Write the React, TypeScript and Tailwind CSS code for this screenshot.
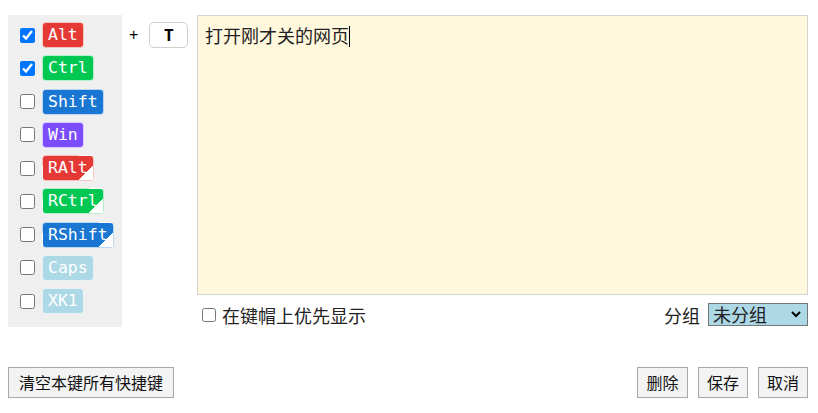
import React from "react";

type Mod = { label: string; bg: string; checked?: boolean };

const mods: Mod[] = [
  { label: "Alt", bg: "bg-[#e53935]", checked: true },
  { label: "Ctrl", bg: "bg-[#00c853]", checked: true },
  { label: "Shift", bg: "bg-[#1976d2]" },
  { label: "Win", bg: "bg-[#7c4dff]" },
  { label: "RAlt", bg: "bg-[linear-gradient(135deg,#e53935_0,#e53935_calc(100%-10px),#ffffff_calc(100%-10px))]" },
  { label: "RCtrl", bg: "bg-[linear-gradient(135deg,#00c853_0,#00c853_calc(100%-10px),#ffffff_calc(100%-10px))]" },
  { label: "RShift", bg: "bg-[linear-gradient(135deg,#1976d2_0,#1976d2_calc(100%-10px),#ffffff_calc(100%-10px))]" },
  { label: "Caps", bg: "bg-[#add8e6]" },
  { label: "XK1", bg: "bg-[#add8e6]" },
];

const cjk = "font-['Microsoft_YaHei','Noto_Sans_CJK_SC',sans-serif]";

function Btn({ children, className = "" }: { children: React.ReactNode; className?: string }) {
  return (
    <button
      className={`h-[31px] px-0 border border-[#a8a8a8] bg-[#f3f3f3] text-[16px] leading-[29px] text-[#111] whitespace-nowrap ${cjk} ${className}`}
    >
      {children}
    </button>
  );
}

export default function App() {
  return (
    <div className={`w-[800px] ml-2 pt-[15px] bg-white ${cjk}`}>
      <div className="flex h-[312px]">
        <div className="w-[114px] shrink-0 bg-[#efefef] pt-[7px] pl-[12px] flex flex-col gap-[7.25px]">
          {mods.map((m) => (
            <div key={m.label} className="flex items-center h-[26px]">
              <input
                type="checkbox"
                defaultChecked={m.checked}
                className="w-[15px] h-[15px] m-0 mr-[7px] accent-[#0075ff]"
              />
              <span
                className={`${m.bg} h-[26px] px-[5px] border border-white/70 rounded-[4px] text-white text-[16.5px] leading-[24px] font-['DejaVu_Sans_Mono',monospace]`}
              >
                {m.label}
              </span>
            </div>
          ))}
        </div>
        <div className="w-[75px] shrink-0 flex items-start pt-[7px] pl-[7px]">
          <span className="h-[26px] leading-[26px] text-[16px] font-['Liberation_Sans',sans-serif] text-black">+</span>
          <span className="ml-[11px] w-[39px] h-[26px] border border-[#d0d0d0] rounded-[5px] bg-white flex items-center justify-center text-[16px] font-bold font-['Noto_Sans',sans-serif] text-black">
            T
          </span>
        </div>
        <div className="flex-1 flex flex-col">
          <div className="h-[280px] border border-[#d4d4d4] bg-[#fff8dc] pl-[7px] pt-[7px] text-[18px] leading-[24px] text-[#222]">
            打开刚才关的网页
            <span className="inline-block w-px h-[21px] bg-black align-[-4px]" />
          </div>
          <div className="flex-1 flex items-center justify-between pt-[7px]">
            <label className="flex items-center pl-[5px] text-[18px] leading-[24px] text-[#222]">
              <input type="checkbox" className="w-[14px] h-[14px] m-0 mr-[6px]" />
              在键帽上优先显示
            </label>
            <div className="flex items-center">
              <span className="text-[18px] leading-[24px] text-[#222] mr-[8px]">分组</span>
              <div className="w-[100px] h-[23px] border border-[#767676] bg-[#add8e6] flex items-center justify-between pl-[4px] pr-[6px] text-[18px] leading-[21px] text-[#222]">
                <span>未分组</span>
                <svg width="10" height="7" viewBox="0 0 10 7">
                  <polyline points="1,1 5,5 9,1" fill="none" stroke="#000" strokeWidth="2" />
                </svg>
              </div>
            </div>
          </div>
        </div>
      </div>
      <div className="flex justify-between mt-[40px]">
        <Btn className="w-[166px]">清空本键所有快捷键</Btn>
        <div className="flex gap-[10px]">
          <Btn className="w-[51px]">删除</Btn>
          <Btn className="w-[50px]">保存</Btn>
          <Btn className="w-[50px]">取消</Btn>
        </div>
      </div>
    </div>
  );
}
